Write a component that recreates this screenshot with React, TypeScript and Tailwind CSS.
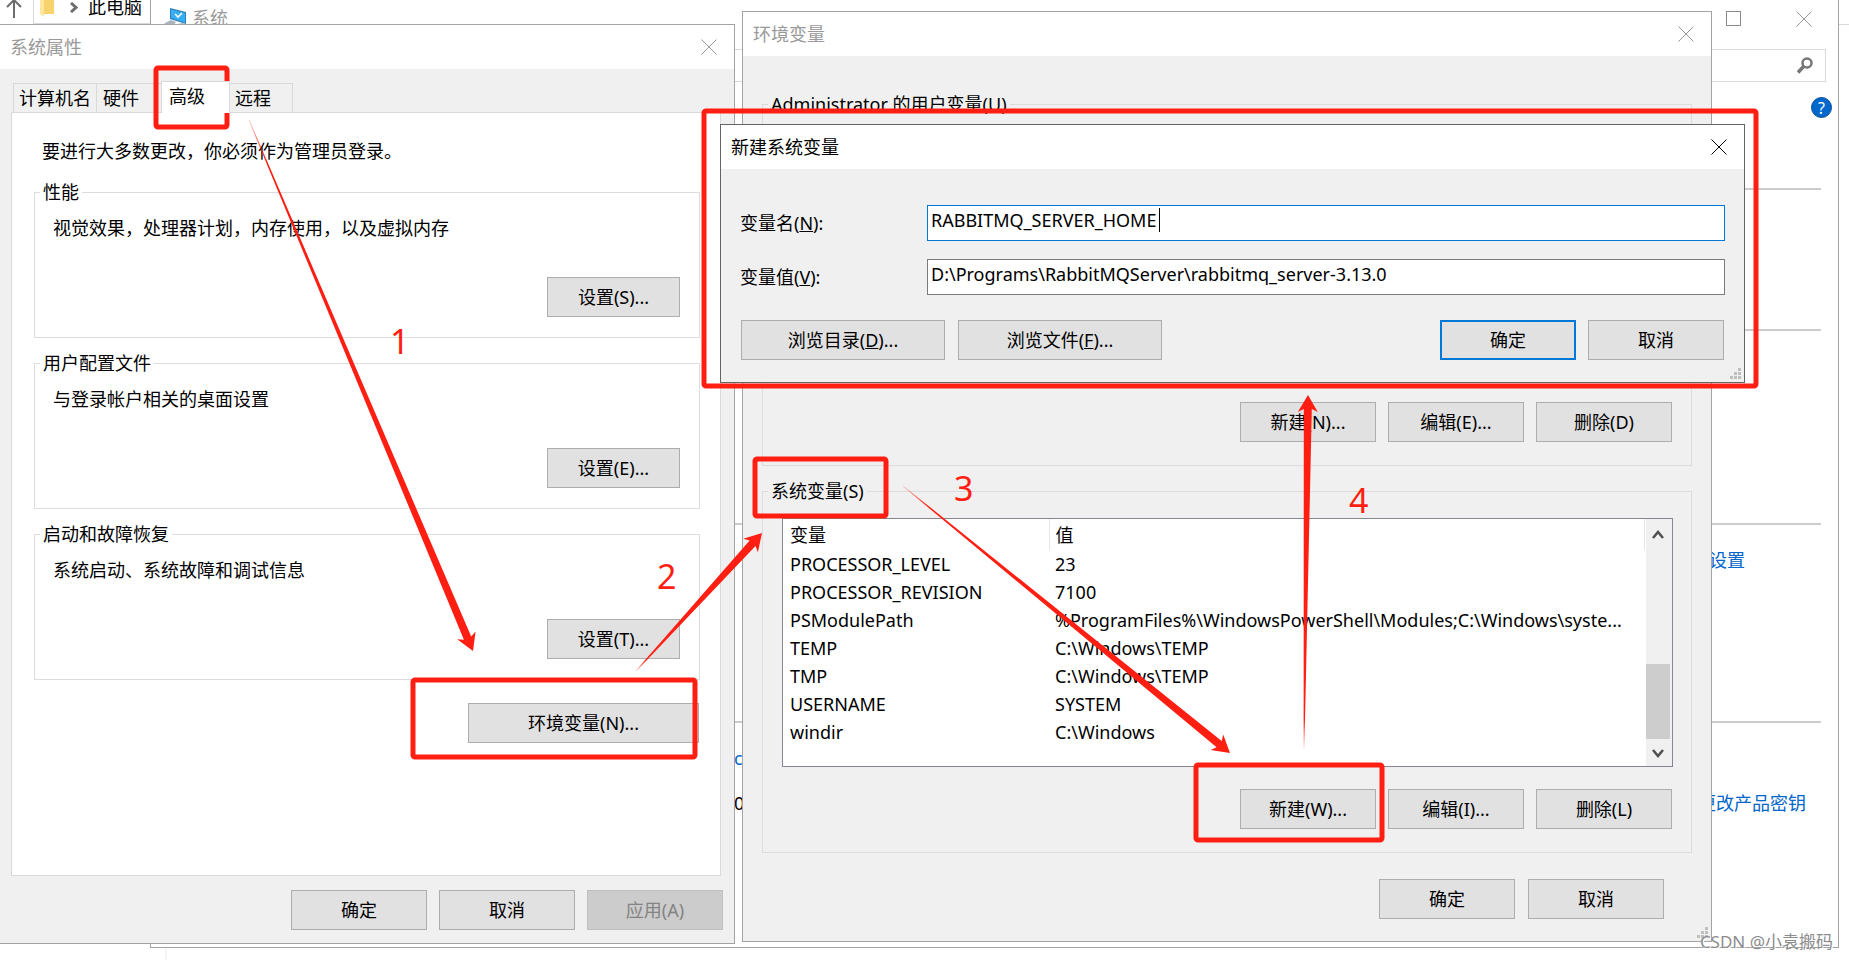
import type { ReactNode } from 'react';
import { clsx } from 'clsx';

interface EnvVariable {
  name: string;
  value: string;
}

interface ArrowProps {
  id: string;
  from: [number, number];
  to: [number, number];
}

const systemVariables: EnvVariable[] = [
  { name: 'PROCESSOR_LEVEL', value: '23' },
  { name: 'PROCESSOR_REVISION', value: '7100' },
  { name: 'PSModulePath', value: '%ProgramFiles%\\WindowsPowerShell\\Modules;C:\\Windows\\syste...' },
  { name: 'TEMP', value: 'C:\\Windows\\TEMP' },
  { name: 'TMP', value: 'C:\\Windows\\TEMP' },
  { name: 'USERNAME', value: 'SYSTEM' },
  { name: 'windir', value: 'C:\\Windows' },
];

const settingGroups = [
  { title: '性能', text: '视觉效果，处理器计划，内存使用，以及虚拟内存', button: '设置(S)...' },
  { title: '用户配置文件', text: '与登录帐户相关的桌面设置', button: '设置(E)...' },
  { title: '启动和故障恢复', text: '系统启动、系统故障和调试信息', button: '设置(T)...' },
];

function CloseIcon() {
  return (
    <svg width="16" height="16" viewBox="0 0 16 16" fill="none" stroke="currentColor">
      <path d="M0.5 0.5 15.5 15.5M15.5 0.5 0.5 15.5" />
    </svg>
  );
}

function TitleBar({ title, active = false }: { title: string; active?: boolean }) {
  return (
    <header
      className={clsx(
        'flex h-11 shrink-0 items-center justify-between bg-white pl-[10px] pr-[17px]',
        active ? 'text-black' : 'text-[#999999]'
      )}
    >
      <h2>{title}</h2>
      <button type="button" aria-label="关闭">
        <CloseIcon />
      </button>
    </header>
  );
}

function Button({
  children,
  className = 'w-[136px]',
  primary = false,
  disabled = false,
}: {
  children: ReactNode;
  className?: string;
  primary?: boolean;
  disabled?: boolean;
}) {
  return (
    <button
      type="button"
      disabled={disabled}
      className={clsx(
        'h-10 shrink-0',
        className,
        primary && 'border-2 border-[#0078d7] bg-[#e1e1e1]',
        disabled && 'border border-[#bfbfbf] bg-[#cccccc] text-[#838383]',
        !primary && !disabled && 'border border-[#adadad] bg-[#e1e1e1]'
      )}
    >
      {children}
    </button>
  );
}

function SizeGrip() {
  return (
    <svg className="absolute bottom-[2px] right-[2px]" width="12" height="12" viewBox="0 0 12 12" fill="#bfbfbf">
      <path d="M8 0h3v3H8zM4 4h3v3H4zM8 4h3v3H8zM0 8h3v3H0zM4 8h3v3H4zM8 8h3v3H8z" />
    </svg>
  );
}

function ExplorerBar() {
  return (
    <div className="flex h-6 w-[151px] items-start">
      <svg className="ml-1.5 shrink-0" width="17" height="18" viewBox="0 0 17 18" fill="none" stroke="#6d6d6d" strokeWidth="2">
        <path d="M8 18V0M1 7 8 0l7 7" />
      </svg>
      <div className="ml-2.5 flex h-6 grow items-start border-b border-l border-[#d9d9d9]">
        <svg className="ml-1.5 shrink-0" width="15" height="17" viewBox="0 0 15 17">
          <path fill="#f7d36e" d="M3 0h11v14H3z" />
          <path fill="#ffe69c" d="M0 0h4v17L0 14z" />
        </svg>
        <svg className="ml-[15px] mt-[2px] shrink-0" width="8" height="11" viewBox="0 0 8 11" fill="none" stroke="#6d6d6d" strokeWidth="3">
          <path d="M1 1 6 5.5 1 10" />
        </svg>
        <span className="ml-[10px] shrink-0 leading-[14px]">此电脑</span>
      </div>
    </div>
  );
}

function SystemWindow() {
  return (
    <section className="absolute left-[150px] right-[10px] top-0 flex h-[948px] flex-col border-x border-b border-[#a3a3a3] bg-white">
      <header className="flex h-[49px] items-start justify-between pl-3 pr-[26px] text-[#999999]">
        <div className="flex items-start">
          <svg className="mt-2" width="24" height="18" viewBox="0 0 24 18">
            <path fill="#2f7fb8" d="M7 0 23 4v12L7 11z" />
            <path fill="#35aef3" d="M8 1.5 22 5v9.5L8 10z" />
            <path fill="none" stroke="#ffffff" strokeWidth="1.6" d="m12 6 3 3 4-4" />
            <path fill="#a9b4bd" d="M2 15 8 12l5 2-3 4H0zM14 16l6-1 2 3h-9z" />
          </svg>
          <h1 className="ml-[5px] leading-9">系统</h1>
        </div>
        <div className="flex gap-[55px] pt-[11px]">
          <button type="button" aria-label="最大化" className="size-[15px] border border-[#8a8a8a]" />
          <button type="button" aria-label="关闭">
            <CloseIcon />
          </button>
        </div>
      </header>
      <div className="mr-3 flex h-[33px] items-center justify-end border border-[#d9d9d9] pr-3">
        <svg width="16" height="17" viewBox="0 0 16 17" fill="none" stroke="#767676">
          <circle cx="10" cy="6" r="4.5" strokeWidth="2.5" />
          <path d="M1 15.5 7 9" strokeWidth="3.5" />
        </svg>
      </div>
      <div className="mr-[17px] flex h-[108px] items-start justify-end border-b-2 border-[#cccccc]">
        <button
          type="button"
          aria-label="帮助"
          className="-mr-[11px] mt-[15px] flex size-[21px] items-center justify-center rounded-full border border-[#0a4f93] bg-[#0067cc] text-[16px] leading-[18px] text-white"
        >
          ?
        </button>
      </div>
      <div className="mr-[17px] h-[141px] border-b-2 border-[#cccccc]" />
      <div className="mr-[17px] h-[194px] border-b-2 border-[#cccccc]" />
      <div className="mr-[17px] flex h-[198px] items-start justify-end border-b-2 border-[#cccccc] pr-[76px] pt-[21px]">
        <a href="#settings" className="text-[#0066cc]">设置</a>
      </div>
      <div className="mr-[17px] pl-[583px] pr-[15px] pt-[21px]">
        <a href="#terms" className="text-[#0066cc]">c</a>
        <div className="mt-[17px] flex justify-between">
          <span>0</span>
          <a href="#product-key" className="text-[#0066cc]">更改产品密钥</a>
        </div>
      </div>
    </section>
  );
}

function SystemProperties() {
  return (
    <section className="absolute left-0 top-6 flex h-[920px] w-[735px] flex-col border-y border-r border-[#a3a3a3] bg-[#f0f0f0]">
      <TitleBar title="系统属性" />
      <div role="tablist" className="mt-3 flex h-[31px] items-end pl-[13px]">
        <button type="button" role="tab" className="h-[29px] w-[83px] border-l border-t border-[#d9d9d9] pl-[5px] text-left">
          计算机名
        </button>
        <button type="button" role="tab" className="h-[29px] w-[65px] border-l border-t border-[#d9d9d9] pl-[6px] text-left">
          硬件
        </button>
        <button
          type="button"
          role="tab"
          aria-selected="true"
          className="z-10 -mb-px flex h-8 w-[69px] border-x border-t border-[#d9d9d9] bg-white pl-[7px]"
        >
          高级
        </button>
        <button type="button" role="tab" className="h-[29px] w-[63px] border-r border-t border-[#d9d9d9] pl-[5px] text-left">
          远程
        </button>
      </div>
      <div className="ml-[11px] mr-[13px] grow border border-[#d9d9d9] bg-white pl-[22px] pr-5 pt-6">
        <p className="mb-[13px] pl-2">要进行大多数更改，你必须作为管理员登录。</p>
        <div className="flex flex-col gap-[11px]">
          {settingGroups.map((group) => (
            <fieldset key={group.title} className="border border-[#dcdcdc] pb-5 pl-[18px] pr-[19px]">
              <legend className="-ml-[13px] px-[3px]">{group.title}</legend>
              <p className="mt-2">{group.text}</p>
              <div className="mt-[35px] flex justify-end">
                <Button className="w-[133px]">{group.button}</Button>
              </div>
            </fieldset>
          ))}
        </div>
        <div className="mt-[23px] flex justify-end pr-px">
          <Button className="w-[231px]">环境变量(N)...</Button>
        </div>
      </div>
      <footer className="flex justify-end gap-3 pb-[13px] pr-[11px] pt-[14px]">
        <Button>确定</Button>
        <Button>取消</Button>
        <Button disabled>应用(A)</Button>
      </footer>
    </section>
  );
}

function VariableList({ rows }: { rows: EnvVariable[] }) {
  return (
    <div className="mt-[13px] flex h-[249px] border border-[#828790] bg-white">
      {rows.length > 0 && (
        <>
          <div className="min-w-0 grow">
            <table className="w-full table-fixed text-left">
              <thead>
                <tr className="h-[31px]">
                  <th className="w-[266px] border-r border-[#e5e5e5] pl-[7px] font-normal">变量</th>
                  <th className="border-r border-[#e5e5e5] pl-[6px] font-normal">值</th>
                </tr>
              </thead>
              <tbody>
                {rows.map((row) => (
                  <tr key={row.name} className="h-7">
                    <td className="pl-[7px]">{row.name}</td>
                    <td className="truncate pl-[6px]">{row.value}</td>
                  </tr>
                ))}
              </tbody>
            </table>
          </div>
          <div className="ml-px flex w-[26px] shrink-0 flex-col bg-[#f0f0f0] text-[#505050]">
            <button type="button" aria-label="向上滚动" className="flex h-8 w-6 items-center justify-center">
              <svg width="12" height="10" viewBox="0 0 12 10" fill="none" stroke="currentColor" strokeWidth="2.5">
                <path d="m1 8 5-6 5 6" />
              </svg>
            </button>
            <div className="grow" />
            <div className="h-[75px] w-6 bg-[#cdcdcd]" />
            <button type="button" aria-label="向下滚动" className="flex h-[27px] w-6 items-center justify-center">
              <svg width="12" height="10" viewBox="0 0 12 10" fill="none" stroke="currentColor" strokeWidth="2.5">
                <path d="m1 2 5 6 5-6" />
              </svg>
            </button>
          </div>
        </>
      )}
    </div>
  );
}

function VariableGroup({ title, rows, keys }: { title: string; rows: EnvVariable[]; keys: [string, string, string] }) {
  return (
    <fieldset className="min-w-0 border border-[#dcdcdc] pb-[23px] pl-[19px] pr-[18px]">
      <legend className="-ml-[14px] px-[3px]">{title}</legend>
      <VariableList rows={rows} />
      <div className="mt-[22px] flex justify-end gap-3 pr-px">
        <Button>新建({keys[0]})...</Button>
        <Button>编辑({keys[1]})...</Button>
        <Button>删除({keys[2]})</Button>
      </div>
    </fieldset>
  );
}

function EnvironmentVariables() {
  return (
    <section className="absolute left-[742px] top-[11px] w-[970px] border border-[#a3a3a3] bg-[#f0f0f0]">
      <TitleBar title="环境变量" />
      <div className="flex flex-col gap-[11px] px-[19px] pt-[34px]">
        <VariableGroup title="Administrator 的用户变量(U)" rows={[]} keys={['N', 'E', 'D']} />
        <VariableGroup title="系统变量(S)" rows={systemVariables} keys={['W', 'I', 'L']} />
      </div>
      <footer className="flex justify-end gap-[13px] pb-[22px] pr-[47px] pt-[26px]">
        <Button>确定</Button>
        <Button>取消</Button>
      </footer>
      <SizeGrip />
    </section>
  );
}

function NewVariableDialog() {
  return (
    <section className="absolute left-[720px] top-[124px] w-[1025px] border border-[#646464] bg-[#f0f0f0]">
      <TitleBar title="新建系统变量" active />
      <form className="px-[19px] pb-[22px] pt-9">
        <div className="flex items-center">
          <label htmlFor="variable-name" className="w-[187px]">
            变量名(<u>N</u>):
          </label>
          <div className="relative grow">
            <input
              id="variable-name"
              defaultValue="RABBITMQ_SERVER_HOME"
              className="block h-9 w-full border border-[#0078d7] bg-white pb-1.5 pl-[3px] outline-none"
            />
            <span className="absolute left-[232px] top-[3px] h-6 w-px bg-black" />
          </div>
        </div>
        <div className="mt-[18px] flex items-center">
          <label htmlFor="variable-value" className="w-[187px]">
            变量值(<u>V</u>):
          </label>
          <input
            id="variable-value"
            defaultValue="D:\Programs\RabbitMQServer\rabbitmq_server-3.13.0"
            className="block h-9 grow border border-[#7a7a7a] bg-white pb-1.5 pl-[3px] outline-none"
          />
        </div>
        <div className="mt-[25px] flex gap-[13px] px-px">
          <Button className="w-[204px]">
            浏览目录(<u>D</u>)...
          </Button>
          <Button className="w-[204px]">
            浏览文件(<u>F</u>)...
          </Button>
          <div className="grow" />
          <div className="flex gap-3">
            <Button primary>确定</Button>
            <Button>取消</Button>
          </div>
        </div>
      </form>
      <SizeGrip />
    </section>
  );
}

// Tapered arrow that fades in from its tail
function Arrow({ id, from, to }: ArrowProps) {
  const dx = to[0] - from[0];
  const dy = to[1] - from[1];
  const length = Math.hypot(dx, dy);
  const ux = dx / length;
  const uy = dy / length;
  const point = (back: number, side: number) =>
    `${(to[0] - ux * back - uy * side).toFixed(1)},${(to[1] - uy * back + ux * side).toFixed(1)}`;

  return (
    <>
      <defs>
        <linearGradient id={id} gradientUnits="userSpaceOnUse" x1={from[0]} y1={from[1]} x2={to[0]} y2={to[1]}>
          <stop offset="0" stopColor="#ff1e12" stopOpacity="0.2" />
          <stop offset="0.08" stopColor="#ff1e12" />
        </linearGradient>
      </defs>
      <polygon
        fill={`url(#${id})`}
        points={[
          point(length, -0.4),
          point(length, 0.4),
          point(14, 4),
          point(17, 10),
          point(0, 0),
          point(17, -10),
          point(14, -4),
        ].join(' ')}
      />
    </>
  );
}

function Annotations() {
  return (
    <svg className="pointer-events-none absolute inset-0 size-full" fill="none">
      <g stroke="#ff1e12" strokeWidth="5">
        <rect x="156" y="68" width="71" height="59" rx="2" />
        <rect x="413" y="680" width="282" height="77" rx="2" />
        <rect x="755" y="459" width="131" height="57" rx="2" />
        <rect x="1196" y="765" width="186" height="75" rx="2" />
        <rect x="704" y="111" width="1052" height="275" rx="2" />
      </g>
      <Arrow id="arrow-1" from={[249, 120]} to={[473, 651]} />
      <Arrow id="arrow-2" from={[636, 671]} to={[762, 533]} />
      <Arrow id="arrow-3" from={[903, 486]} to={[1230, 753]} />
      <Arrow id="arrow-4" from={[1304, 748]} to={[1308, 395]} />
      <g fill="#ff1e12" fontSize="34">
        <text x="390" y="354">1</text>
        <text x="657" y="589">2</text>
        <text x="954" y="501">3</text>
        <text x="1349" y="513">4</text>
      </g>
    </svg>
  );
}

export default function App() {
  return (
    <main className="relative min-h-screen overflow-hidden bg-white font-['Noto_Sans','Noto_Sans_CJK_SC',sans-serif] text-[18px] leading-7 text-black">
      <ExplorerBar />
      <div className="flex h-[936px] justify-between">
        <div className="w-[167px] border-r-2 border-[#f5f5f5]" />
        <div className="w-[10px] border-t border-[#d9d9d9]" />
      </div>
      <SystemWindow />
      <SystemProperties />
      <EnvironmentVariables />
      <NewVariableDialog />
      <Annotations />
      <p className="absolute bottom-1 right-4 text-[17px] text-[#8c8c8c] [text-shadow:1px_1px_0_#ffffff]">CSDN @小袁搬码</p>
    </main>
  );
}
